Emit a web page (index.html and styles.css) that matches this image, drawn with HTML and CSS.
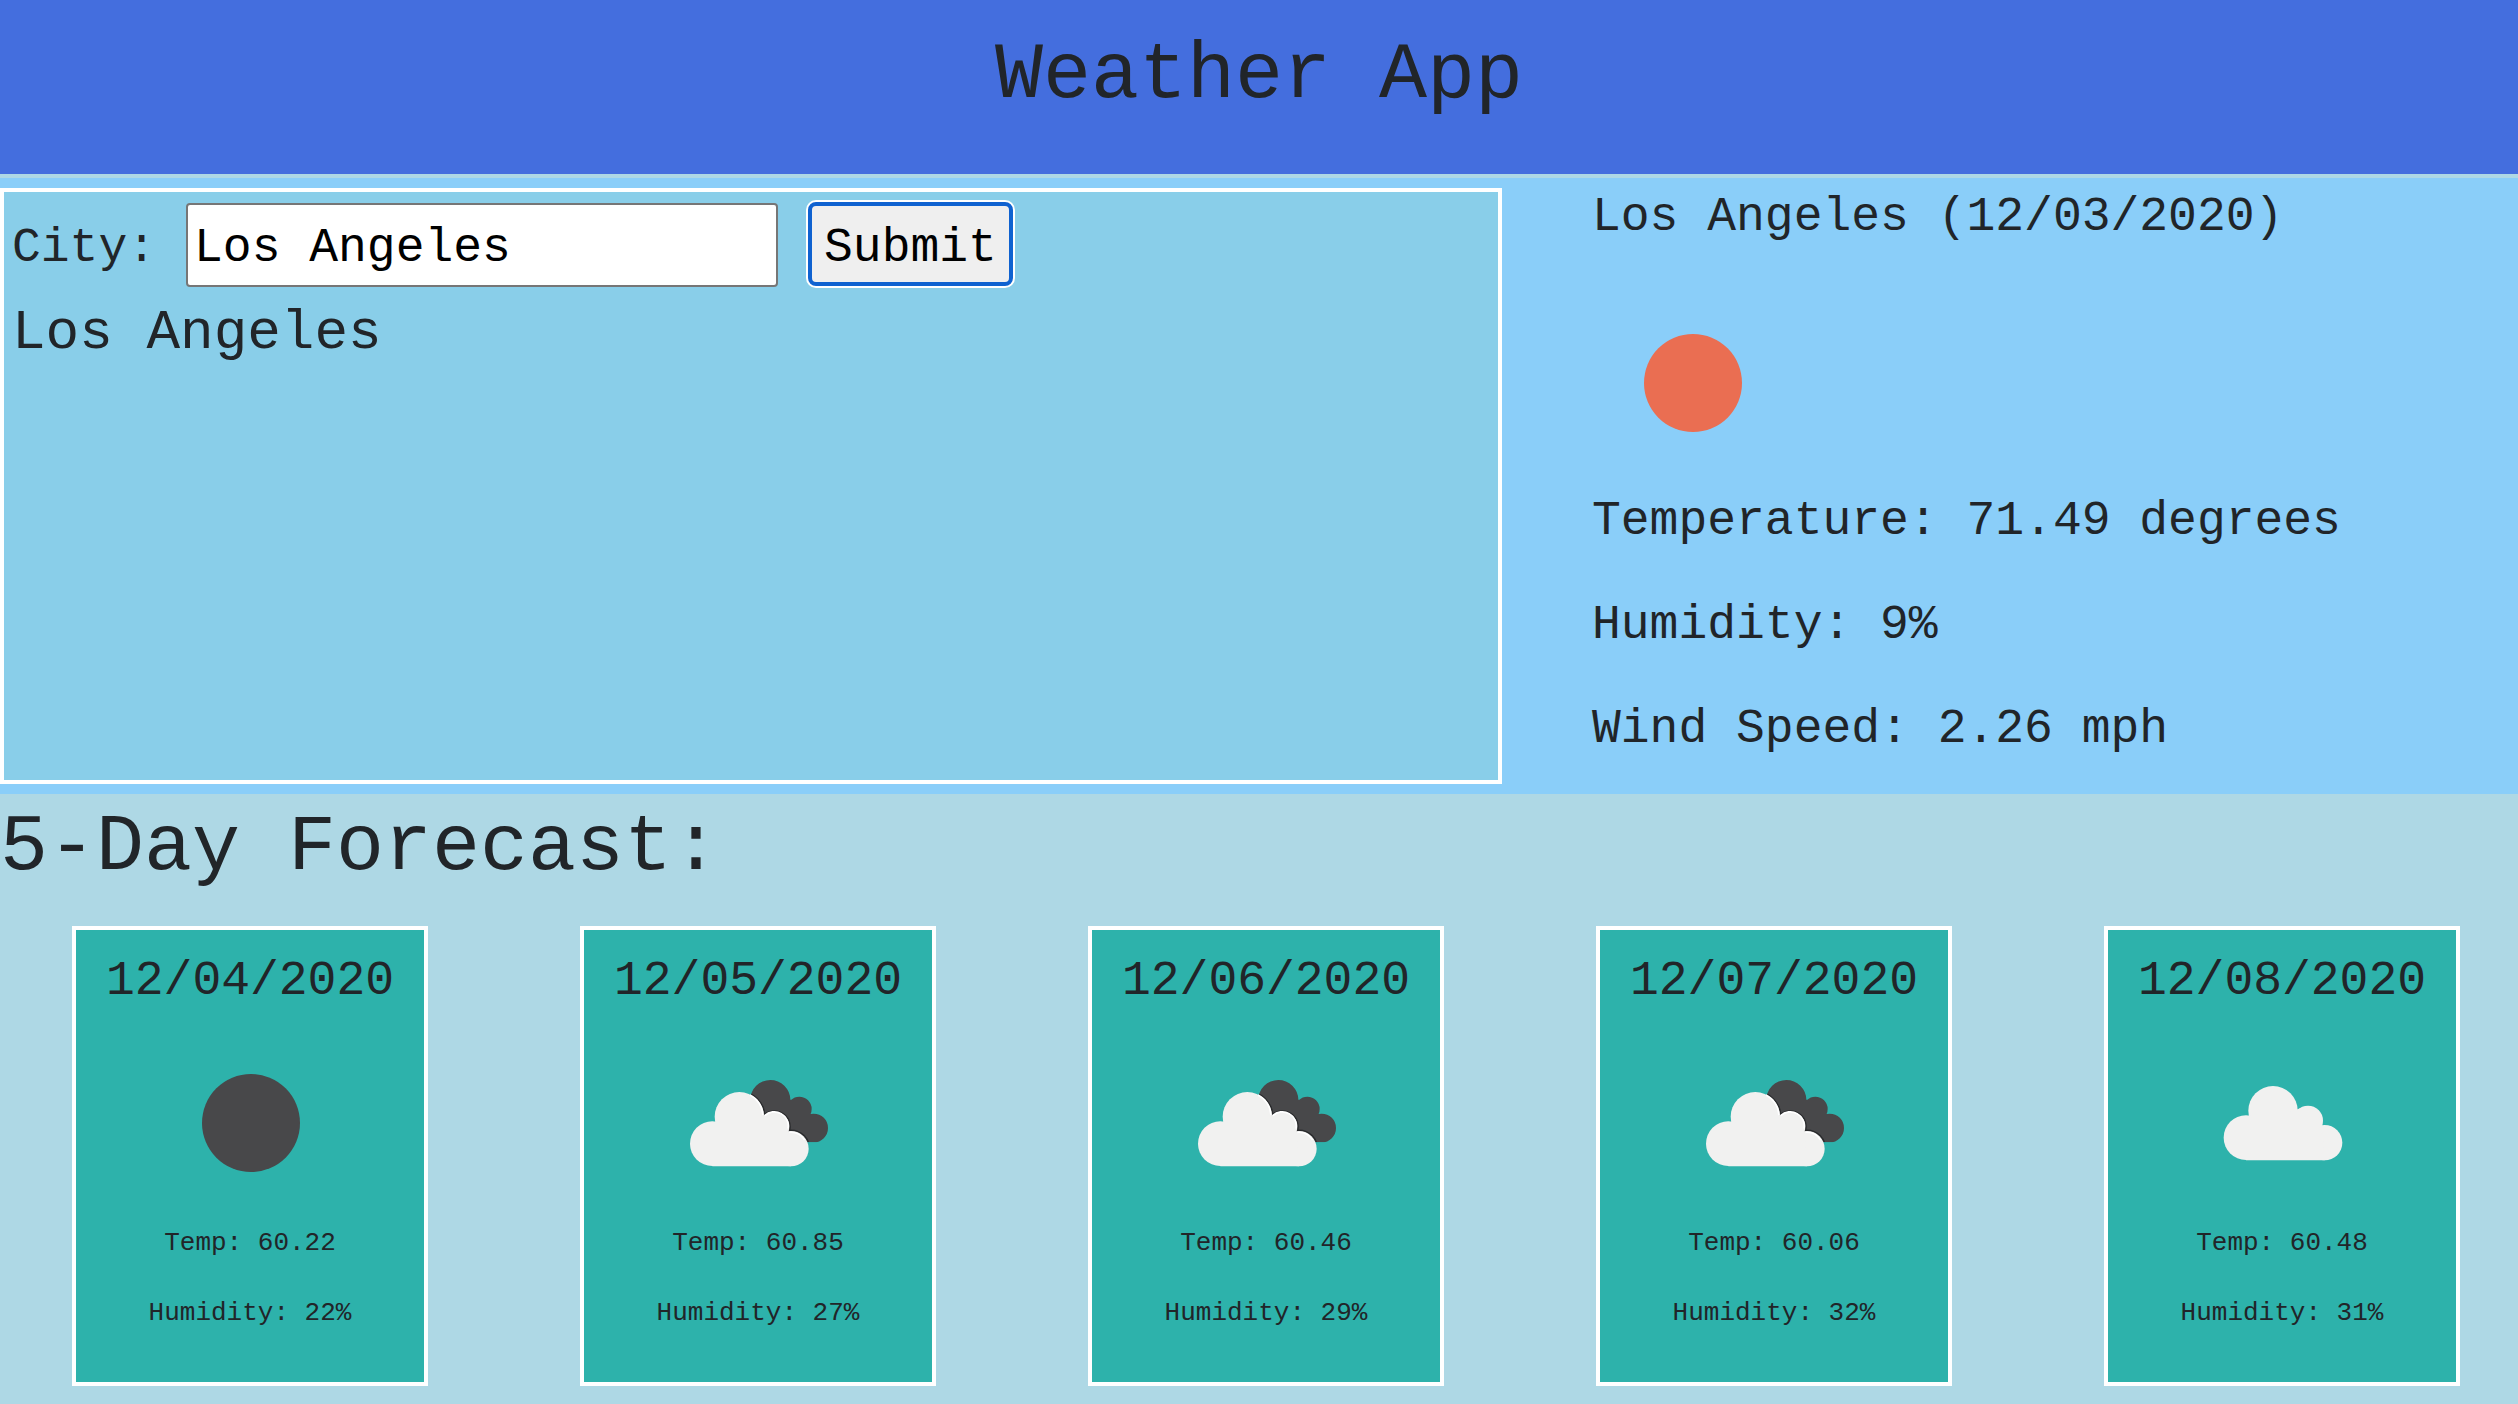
FILE: index.html
```
<!DOCTYPE html>
<html lang="en">
<head>
<meta charset="utf-8">
<meta name="viewport" content="width=device-width, initial-scale=1">
<title>Weather App</title>
<link rel="stylesheet" href="styles.css">
</head>
<body>
<svg class="sprite" aria-hidden="true">
  <defs>
    <g id="cloud-shape">
      <circle cx="208" cy="170" r="74"/>
      <circle cx="127" cy="251" r="67"/>
      <circle cx="313" cy="200" r="45"/>
      <circle cx="363" cy="266" r="53"/>
      <path d="M127 190H208L300 160L355 216L363 319H127Z"/>
    </g>
    <clipPath id="back-cloud">
      <circle cx="301" cy="120" r="60"/>
      <circle cx="388" cy="147" r="37"/>
      <circle cx="431" cy="204" r="43"/>
      <path d="M250 90L360 118L420 163L431 247H250Z"/>
    </clipPath>
    <symbol id="sun" viewBox="0 0 200 200"><circle cx="101" cy="100" r="49"/></symbol>
    <symbol id="cloud" viewBox="-36 -111 600 600">
      <use href="#cloud-shape" transform="translate(29 -18)" fill="#f1f1f0"/>
    </symbol>
    <symbol id="clouds" viewBox="-36 -111 600 600">
      <g clip-path="url(#back-cloud)">
        <rect x="200" y="50" width="300" height="200" fill="#48484a"/>
        <use href="#cloud-shape" fill="none" stroke="#2a2b2d" stroke-width="9"/>
      </g>
      <use href="#cloud-shape" fill="#f1f1f0"/>
      <path d="M240 105A71 71 0 0 1 279 166M284 167A42 42 0 0 1 354 206M358 217A50 50 0 0 1 404 240" fill="none" stroke="#fff" stroke-width="5"/>
    </symbol>
  </defs>
</svg>

<header class="banner"><h1 class="title">Weather App</h1></header>

<main>
  <section class="current">
    <div class="search">
      <form class="search-form">
        <label for="city">City: </label>
        <input class="city-input" id="city" type="text" value="Los Angeles">
        <button class="submit" type="button">Submit</button>
      </form>
      <p class="history">Los Angeles</p>
    </div>
    <div class="conditions">
      <h2 class="place">Los Angeles (12/03/2020)</h2>
      <svg class="icon day" role="img" aria-label="Clear sky"><use href="#sun"/></svg>
      <p>Temperature: 71.49 degrees</p>
      <p>Humidity: 9%</p>
      <p>Wind Speed: 2.26 mph</p>
    </div>
  </section>

  <section class="forecast">
    <h2 class="title">5-Day Forecast:</h2>
    <div class="cards">
      <article class="card">
        <h3 class="date">12/04/2020</h3>
        <svg class="icon night" role="img" aria-label="Clear night"><use href="#sun"/></svg>
        <p>Temp: 60.22</p>
        <p>Humidity: 22%</p>
      </article>
      <article class="card">
        <h3 class="date">12/05/2020</h3>
        <svg class="icon" role="img" aria-label="Broken clouds"><use href="#clouds"/></svg>
        <p>Temp: 60.85</p>
        <p>Humidity: 27%</p>
      </article>
      <article class="card">
        <h3 class="date">12/06/2020</h3>
        <svg class="icon" role="img" aria-label="Broken clouds"><use href="#clouds"/></svg>
        <p>Temp: 60.46</p>
        <p>Humidity: 29%</p>
      </article>
      <article class="card">
        <h3 class="date">12/07/2020</h3>
        <svg class="icon" role="img" aria-label="Broken clouds"><use href="#clouds"/></svg>
        <p>Temp: 60.06</p>
        <p>Humidity: 32%</p>
      </article>
      <article class="card">
        <h3 class="date">12/08/2020</h3>
        <svg class="icon" role="img" aria-label="Scattered clouds"><use href="#cloud"/></svg>
        <p>Temp: 60.48</p>
        <p>Humidity: 31%</p>
      </article>
    </div>
  </section>
</main>
</body>
</html>
```
FILE: styles.css
```
* {
  box-sizing: border-box;
}

body {
  margin: 0;
  background: #aed8e5;
  color: #212529;
  font-family: Courier, "Courier New", "Liberation Mono", monospace;
  font-size: 48px;
  line-height: 72px;
}

h1, h2, h3, p {
  margin: 0;
  font-weight: 400;
}

/* Kept rendered at zero size so that its clip path stays usable */
.sprite {
  display: block;
  width: 0;
  height: 0;
}

.icon {
  display: block;
  width: 200px;
  height: 200px;
}

.day {
  fill: #ea6e52;
}

.night {
  fill: #48484a;
}

.title {
  font-size: 80px;
  line-height: 96px;
}

.banner {
  padding: 28px 0 50px;
  background: #446ede;
  text-align: center;
}

/* Search panel and current conditions */
.current {
  display: grid;
  grid-template-columns: 1502fr 1016fr;
  margin-top: 4px;
  padding: 10px 0;
  background: #8acef9;
}

.search {
  padding: 10px 8px;
  border: 4px solid #fff;
  background: #89cee9;
}

.search-form {
  display: flex;
  align-items: baseline;
  gap: 30px;
}

.city-input,
.submit {
  height: 84px;
  padding: 6px 6px 0;
  color: #000;
  font: inherit;
}

.city-input {
  width: 592px;
  border: 2px solid #767676;
  border-radius: 4px;
  background: #fff;
}

.submit {
  padding: 6px 12px 0;
  border: 4px solid #0f62d0;
  border-radius: 8px;
  background: #efefef;
  box-shadow: 0 0 0 2px #fff;
}

.history {
  margin-top: 13px;
  font-size: 56px;
  line-height: 67px;
}

.conditions {
  padding: 0 0 19px 90px;
}

.conditions .icon {
  margin: 37px 0 2px;
}

.conditions p + p {
  margin-top: 32px;
}

.place,
.date {
  font-size: 48px;
  line-height: 58px;
}

/* Five day forecast */
.forecast {
  padding: 6px 0 18px;
}

.cards {
  display: flex;
  justify-content: space-between;
  margin-top: 30px;
  padding: 0 58px 0 72px;
}

.card {
  width: 356px;
  padding: 22px 0 50px;
  border: 4px solid #fff;
  background: #2db2ab;
  font-size: 26px;
  line-height: 38px;
  text-align: center;
}

.card .icon {
  margin: 13px auto 1px;
}

.card p + p {
  margin-top: 32px;
}
```
